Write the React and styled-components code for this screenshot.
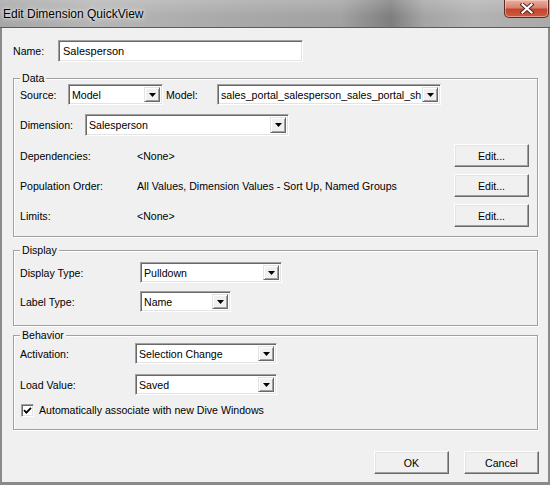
import React from "react";
import styled, { createGlobalStyle } from "styled-components";

const GlobalStyle = createGlobalStyle`
  html, body {
    margin: 0;
    padding: 0;
    background: #f0f0f0;
  }
  body {
    font-family: "Liberation Sans", Arial, sans-serif;
    font-size: 10.6px;
    color: #000;
  }
`;

const Combo = ({ width, value }) => (
  <ComboBox $w={width}>
    <ComboText>{value}</ComboText>
    <ArrowBtn>
      <svg width="7" height="4" viewBox="0 0 7 4">
        <polygon points="0,0 7,0 3.5,4" fill="#000" />
      </svg>
    </ArrowBtn>
  </ComboBox>
);

const CheckBox = () => (
  <CheckSquare>
    <svg width="9" height="9" viewBox="0 0 9 9">
      <path d="M1 4.2 L3.4 6.6 L8 1.8" fill="none" stroke="#000" strokeWidth="1.8" />
    </svg>
  </CheckSquare>
);

export default function App() {
  return (
    <>
      <GlobalStyle />
      <Window>
        <TitleBar>
          <Title>Edit Dimension QuickView</Title>
          <CloseBtn>
            <svg width="14" height="11" viewBox="0 0 14 11">
              <path d="M2.5 1.5 L11.5 9.5 M11.5 1.5 L2.5 9.5" stroke="#4a2420" strokeWidth="4" strokeLinecap="square" />
              <path d="M2.5 1.5 L11.5 9.5 M11.5 1.5 L2.5 9.5" stroke="#fff" strokeWidth="2.2" strokeLinecap="square" />
            </svg>
          </CloseBtn>
        </TitleBar>

        <Frame>
          <Row $h={22}>
            <Label $w={45}>Name:</Label>
            <TextInput>Salesperson</TextInput>
          </Row>

          <Group $mt={16} $pb={9}>
            <Legend>Data</Legend>
            <Row $h={21}>
              <Label $w={48}>Source:</Label>
              <Combo width={95} value="Model" />
              <Label $w={51} $ml={3}>Model:</Label>
              <Combo width={224} value="sales_portal_salesperson_sales_portal_sh" />
            </Row>
            <Row $h={22} $mt={9}>
              <Label $w={65}>Dimension:</Label>
              <Combo width={204} value="Salesperson" />
            </Row>
            <Row $h={23} $mt={8}>
              <Label $w={117}>Dependencies:</Label>
              <Value>&lt;None&gt;</Value>
              <Button>Edit...</Button>
            </Row>
            <Row $h={23} $mt={7}>
              <Label $w={117}>Population Order:</Label>
              <Value>All Values, Dimension Values - Sort Up, Named Groups</Value>
              <Button>Edit...</Button>
            </Row>
            <Row $h={23} $mt={7}>
              <Label $w={117}>Limits:</Label>
              <Value>&lt;None&gt;</Value>
              <Button>Edit...</Button>
            </Row>
          </Group>

          <Group $mt={13} $pb={13}>
            <Legend>Display</Legend>
            <Row $h={21} $mt={6}>
              <Label $w={120}>Display Type:</Label>
              <Combo width={142} value="Pulldown" />
            </Row>
            <Row $h={21} $mt={8}>
              <Label $w={120}>Label Type:</Label>
              <Combo width={91} value="Name" />
            </Row>
          </Group>

          <Group $mt={9} $pb={12}>
            <Legend>Behavior</Legend>
            <Row $h={21} $mt={2}>
              <Label $w={115}>Activation:</Label>
              <Combo width={142} value="Selection Change" />
            </Row>
            <Row $h={21} $mt={10}>
              <Label $w={115}>Load Value:</Label>
              <Combo width={142} value="Saved" />
            </Row>
            <Row $h={14} $mt={8}>
              <CheckBox />
              <CheckText>Automatically associate with new Dive Windows</CheckText>
            </Row>
          </Group>

          <Footer>
            <Button>OK</Button>
            <Button>Cancel</Button>
          </Footer>
        </Frame>
      </Window>
    </>
  );
}

const Window = styled.div`
  width: 550px;
  height: 485px;
  display: flex;
  flex-direction: column;
  background: #f0f0f0;
  overflow: hidden;
`;

const TitleBar = styled.div`
  height: 27px;
  flex-shrink: 0;
  display: flex;
  justify-content: space-between;
  align-items: flex-start;
  padding: 0 1px 0 3px;
  border-bottom: 1px solid #5c5c5c;
  background:
    linear-gradient(to bottom, rgba(255, 255, 255, 0.18), rgba(255, 255, 255, 0) 60%),
    linear-gradient(
      to right,
      #a6a6a6 0%,
      #b6b6b6 18%,
      #aaaaaa 40%,
      #a2a2a2 62%,
      #7e7e7e 71%,
      #a4a4a4 77%,
      #b3b3b3 86%,
      #a9a9a9 100%
    );
`;

const Title = styled.span`
  align-self: center;
  font-size: 12px;
  color: #000;
  text-shadow: 0 0 6px rgba(255, 255, 255, 0.9), 0 0 3px rgba(255, 255, 255, 0.8);
`;

const CloseBtn = styled.div`
  width: 45px;
  height: 18px;
  box-sizing: border-box;
  display: flex;
  align-items: center;
  justify-content: center;
  border: 1px solid #5a2a22;
  border-top: none;
  border-radius: 0 0 5px 5px;
  background: linear-gradient(to bottom, #e9b1a3 0%, #d8826d 45%, #c2452d 55%, #cf5b40 100%);
  box-shadow: inset 0 0 0 1px rgba(255, 220, 210, 0.5);
`;

const Frame = styled.div`
  flex: 1;
  display: flex;
  flex-direction: column;
  padding: 12px 10px 0 11px;
  border-left: 2px solid #8a8a8a;
  border-right: 2px solid #8a8a8a;
  border-bottom: 3px solid #8a8a8a;
`;

const Row = styled.div`
  display: flex;
  align-items: center;
  height: ${(p) => p.$h}px;
  margin-top: ${(p) => p.$mt || 0}px;
  flex-shrink: 0;
`;

const Label = styled.span`
  width: ${(p) => p.$w}px;
  margin-left: ${(p) => p.$ml || 0}px;
  flex-shrink: 0;
  white-space: nowrap;
`;

const Value = styled.span`
  flex: 1;
  white-space: nowrap;
`;

const sunken = `
  box-sizing: border-box;
  background: #fff;
  border: 1px solid;
  border-color: #a0a0a0 #ffffff #ffffff #a0a0a0;
  box-shadow: inset 1px 1px 0 #696969, inset -1px -1px 0 #e3e3e3;
`;

const TextInput = styled.div`
  ${sunken}
  width: 245px;
  height: 22px;
  padding: 0 4px;
  line-height: 20px;
  font-size: 11px;
`;

const ComboBox = styled.div`
  ${sunken}
  width: ${(p) => p.$w}px;
  height: 100%;
  display: flex;
  padding: 2px;
  flex-shrink: 0;
`;

const ComboText = styled.span`
  flex: 1;
  min-width: 0;
  overflow: hidden;
  white-space: nowrap;
  padding-left: 1px;
  display: flex;
  align-items: center;
`;

const ArrowBtn = styled.span`
  width: 16px;
  flex-shrink: 0;
  box-sizing: border-box;
  display: flex;
  align-items: center;
  justify-content: center;
  background: #f0f0f0;
  border: 1px solid;
  border-color: #e3e3e3 #696969 #696969 #e3e3e3;
  box-shadow: inset 1px 1px 0 #fff, inset -1px -1px 0 #a0a0a0;
`;

const Group = styled.div`
  display: flex;
  flex-direction: column;
  margin-top: ${(p) => p.$mt}px;
  padding: 0 8px ${(p) => p.$pb}px 6px;
  border: 1px solid #a0a0a0;
  box-shadow: inset 1px 1px 0 #fff, 1px 1px 0 #fff;
`;

const Legend = styled.span`
  align-self: flex-start;
  margin: -8px 0 -1px 0;
  padding: 0 2px;
  line-height: 14px;
  background: #f0f0f0;
`;

const Button = styled.div`
  width: 75px;
  height: 23px;
  box-sizing: border-box;
  flex-shrink: 0;
  display: flex;
  align-items: center;
  justify-content: center;
  background: #f0f0f0;
  border: 1px solid;
  border-color: #ffffff #696969 #696969 #ffffff;
  box-shadow: inset -1px -1px 0 #a0a0a0, inset 1px 1px 0 #e3e3e3;
`;

const CheckSquare = styled.span`
  ${sunken}
  width: 13px;
  height: 13px;
  margin-left: 1px;
  display: flex;
  align-items: center;
  justify-content: center;
  flex-shrink: 0;
`;

const CheckText = styled.span`
  margin-left: 5px;
  white-space: nowrap;
`;

const Footer = styled.div`
  display: flex;
  justify-content: flex-end;
  gap: 15px;
  margin-top: 21px;
  margin-right: -1px;
`;
